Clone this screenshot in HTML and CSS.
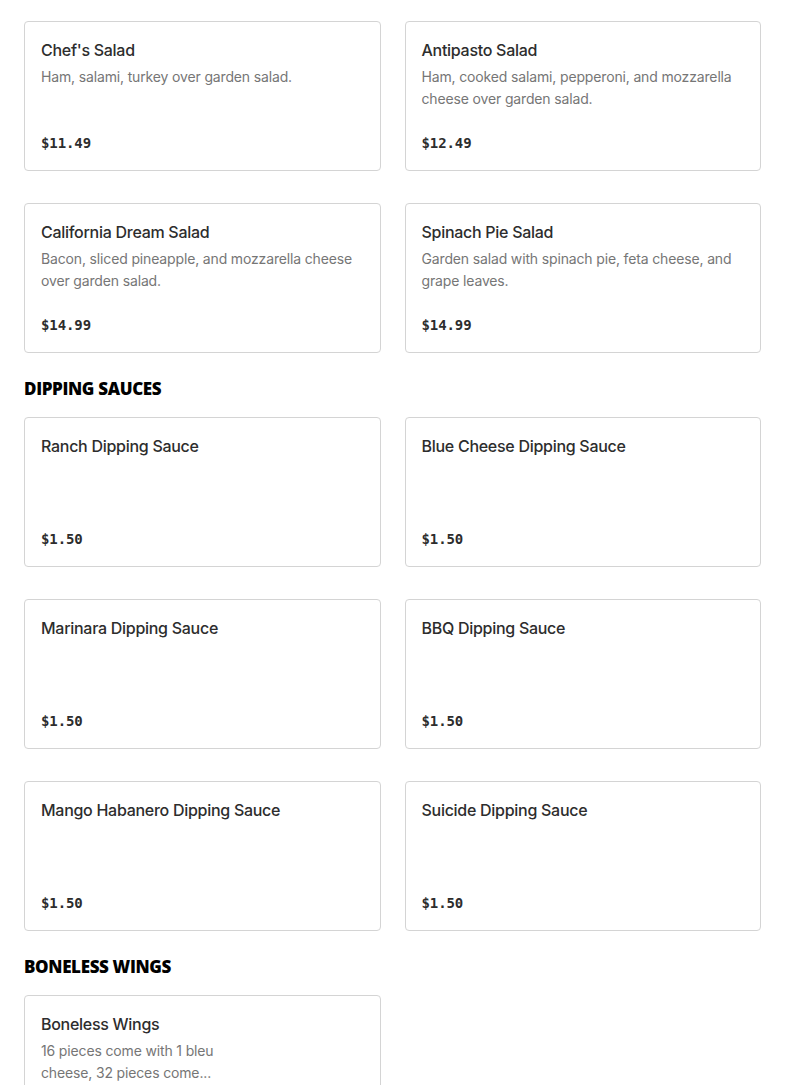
FILE: index.html
```html
<!DOCTYPE html>
<html lang="en">
<head>
<meta charset="utf-8">
<title>Menu</title>
<link rel="stylesheet" href="styles.css">
</head>
<body>
<main class="menu">
  <section class="section">
    <div class="grid">
      <article class="card">
        <h3 class="card-title">Chef's Salad</h3>
        <p class="card-desc">Ham, salami, turkey over garden salad.</p>
        <div class="card-price">$11.49</div>
      </article>
      <article class="card">
        <h3 class="card-title">Antipasto Salad</h3>
        <p class="card-desc">Ham, cooked salami, pepperoni, and mozzarella cheese over garden salad.</p>
        <div class="card-price">$12.49</div>
      </article>
      <article class="card">
        <h3 class="card-title">California Dream Salad</h3>
        <p class="card-desc">Bacon, sliced pineapple, and mozzarella cheese over garden salad.</p>
        <div class="card-price">$14.99</div>
      </article>
      <article class="card">
        <h3 class="card-title">Spinach Pie Salad</h3>
        <p class="card-desc">Garden salad with spinach pie, feta cheese, and grape leaves.</p>
        <div class="card-price">$14.99</div>
      </article>
    </div>
  </section>

  <section class="section">
    <h2 class="section-title">DIPPING SAUCES</h2>
    <div class="grid">
      <article class="card">
        <h3 class="card-title">Ranch Dipping Sauce</h3>
        <div class="card-price">$1.50</div>
      </article>
      <article class="card">
        <h3 class="card-title">Blue Cheese Dipping Sauce</h3>
        <div class="card-price">$1.50</div>
      </article>
      <article class="card">
        <h3 class="card-title">Marinara Dipping Sauce</h3>
        <div class="card-price">$1.50</div>
      </article>
      <article class="card">
        <h3 class="card-title">BBQ Dipping Sauce</h3>
        <div class="card-price">$1.50</div>
      </article>
      <article class="card">
        <h3 class="card-title">Mango Habanero Dipping Sauce</h3>
        <div class="card-price">$1.50</div>
      </article>
      <article class="card">
        <h3 class="card-title">Suicide Dipping Sauce</h3>
        <div class="card-price">$1.50</div>
      </article>
    </div>
  </section>

  <section class="section">
    <h2 class="section-title">BONELESS WINGS</h2>
    <div class="grid">
      <article class="card">
        <h3 class="card-title">Boneless Wings</h3>
        <p class="card-desc card-desc--narrow">16 pieces come with 1 bleu cheese, 32 pieces come...</p>
        <div class="card-price">$15.99</div>
      </article>
    </div>
  </section>
</main>
</body>
</html>
```
FILE: styles.css
```css
* { box-sizing: border-box; }

html, body {
  margin: 0;
  padding: 0;
  background: #ffffff;
}

body {
  font-family: Inter, "Noto Sans", sans-serif;
  color: #2d2d2d;
}

.menu {
  padding: 21px 24px 40px 24px;
}

.section {
  margin-bottom: 24px;
}

.section-title {
  margin: 0 0 16px 0;
  font-family: "Open Sans", Inter, sans-serif;
  font-weight: 800;
  font-size: 17px;
  line-height: 24px;
  color: #000000;
  letter-spacing: -0.35px;
}

.grid {
  display: grid;
  grid-template-columns: 1fr 1fr;
  column-gap: 24px;
  row-gap: 32px;
}

.card {
  display: flex;
  flex-direction: column;
  height: 150px;
  padding: 16px;
  border: 1px solid #d4d4d4;
  border-radius: 4px;
  background: #fff;
}

.card-title {
  margin: 0;
  font-size: 16px;
  font-weight: 500;
  line-height: 24px;
  color: #2d2d2d;
  letter-spacing: -0.28px;
}

.card-desc {
  margin: 4px 0 0 0;
  font-size: 14px;
  line-height: 22px;
  color: #767676;
  letter-spacing: -0.15px;
}

.card-desc--narrow {
  max-width: 200px;
}

.card-price {
  margin-top: auto;
  font-family: "DejaVu Sans Mono", "Liberation Mono", monospace;
  font-weight: 700;
  font-size: 14px;
  line-height: 22px;
  color: #2d2d2d;
  letter-spacing: -0.1px;
}
```
